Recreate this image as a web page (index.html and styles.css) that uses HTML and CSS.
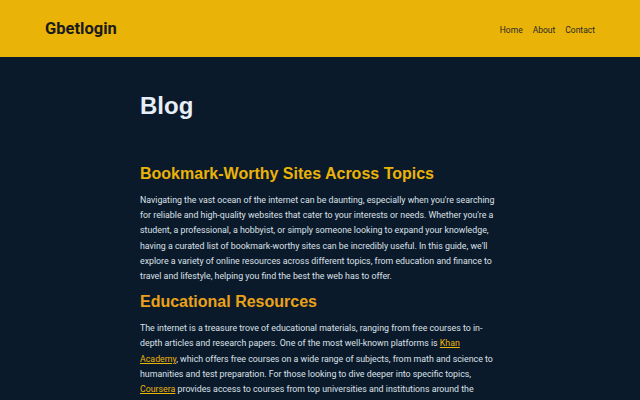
FILE: index.html
```html
<!DOCTYPE html>
<html>
<head>
<meta charset="utf-8">
<link rel="stylesheet" href="styles.css">
</head>
<body>
<header class="site-header">
  <div class="logo">Gbetlogin</div>
  <nav class="nav">
    <a class="nav-link" href="#home">Home</a>
    <a class="nav-link" href="#about">About</a>
    <a class="nav-link" href="#contact">Contact</a>
  </nav>
</header>
<main class="content">
  <h1 class="page-title">Blog</h1>
  <article class="post">
    <h2 class="post-title">Bookmark-Worthy Sites Across Topics</h2>
    <p>Navigating the vast ocean of the internet can be daunting, especially when you're searching for reliable and high-quality websites that cater to your interests or needs. Whether you're a student, a professional, a hobbyist, or simply someone looking to expand your knowledge, having a curated list of bookmark-worthy sites can be incredibly useful. In this guide, we'll explore a variety of online resources across different topics, from education and finance to travel and lifestyle, helping you find the best the web has to offer.</p>
    <h2 class="section-title">Educational Resources</h2>
    <p>The internet is a treasure trove of educational materials, ranging from free courses to in-depth articles and research papers. One of the most well-known platforms is <a href="#khan">Khan Academy</a>, which offers free courses on a wide range of subjects, from math and science to humanities and test preparation. For those looking to dive deeper into specific topics, <a href="#coursera">Coursera</a> provides access to courses from top universities and institutions around the world, allowing you to learn at your own pace.</p>
  </article>
</main>
</body>
</html>
```
FILE: styles.css
```css
html, body {
  margin: 0;
  padding: 0;
}
body {
  background: #0b1a2b;
  color: #dce1e8;
  font-family: Roboto, "Liberation Sans", sans-serif;
}
.site-header {
  background: #e9b308;
  height: 57px;
  display: flex;
  align-items: center;
  justify-content: space-between;
  padding: 0 45px;
  box-sizing: border-box;
}
.logo {
  font-size: 16.5px;
  font-weight: 700;
  color: #1a1a1a;
}
.nav {
  display: flex;
  gap: 10px;
  padding-top: 2px;
}
.nav-link, .nav-link:link, .nav-link:visited {
  color: #2a2a2a;
  text-decoration: none;
  font-size: 8.5px;
}
.content {
  width: 359px;
  margin: 0 auto;
  padding: 34px 1px 0 0;
}
.page-title {
  font-family: "Liberation Sans", Arial, sans-serif;
  font-size: 24px;
  font-weight: 700;
  color: #e8eef8;
  margin: 0 0 42px;
  line-height: 30px;
}
.post-title, .section-title {
  font-family: "Liberation Sans", Arial, sans-serif;
  font-size: 16px;
  font-weight: 700;
  margin: 0;
  line-height: 22px;
}
.post-title {
  color: #eab308;
  margin-bottom: 8px;
}
.section-title {
  color: #eaa21a;
  margin-top: 7px;
  margin-bottom: 8px;
}
p {
  font-size: 8.8px;
  line-height: 15.2px;
  margin: 0;
}
p a, p a:visited {
  color: #eab308;
  text-decoration: underline;
}
```
